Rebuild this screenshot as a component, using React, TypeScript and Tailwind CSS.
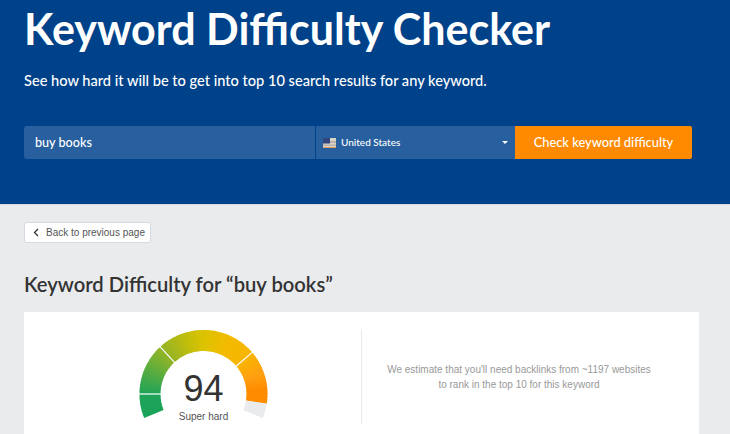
import React from "react";

const stops: [number, string][] = [
  [-22, "#1aa35a"],
  [0, "#1fa358"],
  [25, "#5cad3e"],
  [47, "#94b426"],
  [70, "#bcbd0e"],
  [90, "#dcc300"],
  [115, "#f3bb00"],
  [139, "#f8b500"],
  [160, "#ffa112"],
  [175, "#ff8c00"],
  [189, "#ff8b00"],
];

function hex(c: string) {
  return [1, 3, 5].map((i) => parseInt(c.slice(i, i + 2), 16));
}

function colorAt(a: number) {
  for (let i = 0; i < stops.length - 1; i++) {
    const [a0, c0] = stops[i];
    const [a1, c1] = stops[i + 1];
    if (a >= a0 && a <= a1) {
      const t = (a - a0) / (a1 - a0);
      const x = hex(c0);
      const y = hex(c1);
      return `rgb(${x.map((v, k) => Math.round(v + (y[k] - v) * t)).join(",")})`;
    }
  }
  return "#ff8b00";
}

const CX = 69.5;
const CY = 70;

function pt(r: number, a: number) {
  const rad = (a * Math.PI) / 180;
  return [CX - r * Math.cos(rad), CY - r * Math.sin(rad)];
}

function slice(a0: number, a1: number, ro = 64, ri = 43) {
  const p = [pt(ro, a0), pt(ro, a1), pt(ri, a1), pt(ri, a0)];
  return `M${p[0][0]} ${p[0][1]}A${ro} ${ro} 0 0 1 ${p[1][0]} ${p[1][1]}L${p[2][0]} ${p[2][1]}A${ri} ${ri} 0 0 0 ${p[3][0]} ${p[3][1]}Z`;
}

function Gauge() {
  const slices = [];
  for (let a = -22; a < 188.5; a += 3) {
    const end = Math.min(a + 4, 188.6);
    slices.push(<path key={a} d={slice(a, end)} fill={colorAt(a + 1.5)} />);
  }
  return (
    <div className="relative w-[140px] h-[105px]">
      <svg width="140" height="105" viewBox="0 0 140 105" className="block">
        {slices}
        <path d={slice(188.6, 202)} fill="#eaebed" />
        {[0, 47.5, 139.5].map((a) => {
          const p = pt(66, a);
          const q = pt(42, a);
          return (
            <line key={a} x1={p[0]} y1={p[1]} x2={q[0]} y2={q[1]} stroke="#fff" strokeWidth="1.2" />
          );
        })}
      </svg>
      <div className="absolute left-0 right-0 top-[43px] text-center font-['Liberation_Sans',sans-serif] text-[36px] leading-[44px] text-[#333]">
        94
      </div>
      <div className="absolute left-0 right-0 top-[86px] text-center font-['Liberation_Sans',sans-serif] text-[10px] leading-[14px] text-[#555]">
        Super hard
      </div>
    </div>
  );
}

function Flag() {
  return (
    <svg width="13" height="10" viewBox="0 0 13 10" className="block shrink-0">
      <rect width="13" height="10" fill="#d9d3c8" />
      <rect y="3" width="13" height="2" fill="#b9b2ab" />
      <rect y="6.5" width="13" height="1.5" fill="#b9b2ab" />
      <rect y="9" width="13" height="1" fill="#e09a5a" />
      <rect width="7" height="5.5" fill="#33457f" />
    </svg>
  );
}

export default function App() {
  return (
    <div className="h-[434px] w-[730px] overflow-hidden bg-[#eaebed] font-['Lato',sans-serif]">
      <div className="h-[205px] bg-[#00428a] border-b border-[#d5dae3] px-6 pt-[3px]">
        <h1 className="text-[43px] leading-[52px] font-bold text-white">Keyword Difficulty Checker</h1>
        <p className="mt-[14px] text-[14.6px] leading-[24px] font-medium text-white">
          See how hard it will be to get into top 10 search results for any keyword.
        </p>
        <div className="mt-[33px] flex h-[33px] w-[668px]">
          <div className="flex w-[291px] items-center rounded-l-[3px] bg-[#285f9f] pl-[11px] pt-[2px] text-[12.6px] font-medium text-white">
            buy books
          </div>
          <div className="ml-px flex w-[199px] items-center bg-[#285f9f] pl-[7px] pr-[7px] text-[10px] font-medium text-white">
            <Flag />
            <span className="ml-[5px] flex-1">United States</span>
            <span className="h-0 w-0 border-x-[3px] border-t-[3px] border-x-transparent border-t-white" />
          </div>
          <button className="w-[177px] rounded-r-[2px] bg-[#ff8a00] text-[12.8px] font-medium text-white">
            Check keyword difficulty
          </button>
        </div>
      </div>

      <div className="px-6">
        <button className="mt-[17px] flex h-[21px] w-[127px] items-center rounded-[3px] border border-[#d5d9e2] bg-white pl-[8px] font-['Liberation_Sans',sans-serif] text-[10px] text-[#555]">
          <svg width="6" height="9" viewBox="0 0 6 9" fill="none" stroke="#333" strokeWidth="1.3" className="block shrink-0">
            <path d="M5 1L1.5 4.5L5 8" />
          </svg>
          <span className="ml-[7px]">Back to previous page</span>
        </button>
        <h2 className="mt-[27px] text-[20.2px] leading-[28px] font-semibold text-[#333]">
          Keyword Difficulty for “buy books”
        </h2>
        <div className="mt-[14px] flex h-[140px] w-[675px] bg-white pt-[17px]">
          <div className="flex w-[337px] justify-center pl-[22px] -mt-[5px]">
            <Gauge />
          </div>
          <div className="flex h-[95px] flex-1 flex-col justify-center border-l border-[#e8e9eb] pr-[23px] text-center font-['Liberation_Sans',sans-serif] text-[10px] leading-[15px] text-[#999]">
            <p>We estimate that you'll need backlinks from ~1197 websites</p>
            <p>to rank in the top 10 for this keyword</p>
          </div>
        </div>
      </div>
    </div>
  );
}
